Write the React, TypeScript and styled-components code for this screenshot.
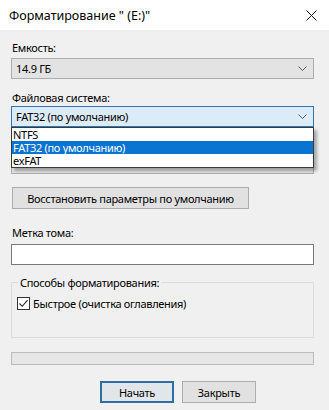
import React from 'react';
import styled, { createGlobalStyle } from 'styled-components';

const GlobalStyle = createGlobalStyle`
  html, body {
    margin: 0;
    padding: 0;
    background: #f0f0f0;
  }
  body {
    font-family: "Noto Sans", "Open Sans", sans-serif;
    font-size: 11px;
    letter-spacing: -0.3px;
    color: #000;
  }
`;

// Окно диалога
const Window = styled.div`
  width: 329px;
  height: 410px;
  background: #f0f0f0;
  display: flex;
  flex-direction: column;
  overflow: hidden;
`;

const TitleBar = styled.div`
  height: 30px;
  flex-shrink: 0;
  background: #fff;
  display: flex;
  align-items: center;
  justify-content: space-between;
  padding: 0 12px 0 9px;
  font-size: 12.5px;
  letter-spacing: 0;
`;

const CloseIcon = styled.svg`
  width: 11px;
  height: 11px;
  margin-top: 1px;
`;

const Content = styled.div`
  display: flex;
  flex-direction: column;
  padding: 0 15px 0 11px;
`;

const Label = styled.div<{ $top: number }>`
  line-height: 15px;
  margin-top: ${(p) => p.$top}px;
  padding-left: 1px;
`;

const ComboWrap = styled.div<{ $top: number }>`
  position: relative;
  margin-top: ${(p) => p.$top}px;
`;

const Combo = styled.div<{ $variant: 'gray' | 'focus' }>`
  height: 21px;
  box-sizing: border-box;
  display: flex;
  align-items: center;
  justify-content: space-between;
  padding: 0 6px 0 4px;
  border: 1px solid ${(p) => (p.$variant === 'focus' ? '#2f76b5' : '#adadad')};
  background: ${(p) => (p.$variant === 'focus' ? '#dcebf8' : '#e3e3e3')};
`;

const Chevron = styled.svg`
  width: 9px;
  height: 5px;
`;

// Выпадающий список поверх содержимого
const DropList = styled.ul`
  position: absolute;
  top: 100%;
  left: 0;
  right: 0;
  margin: 0;
  padding: 0;
  list-style: none;
  background: #fff;
  border: 1px solid #3a3a3a;
  box-shadow: 3px 3px 3px rgba(0, 0, 0, 0.3);
  z-index: 2;
`;

const DropItem = styled.li<{ $selected?: boolean }>`
  height: 13px;
  line-height: 13px;
  padding-left: 1px;
  background: ${(p) => (p.$selected ? '#0a74d2' : '#fff')};
  color: ${(p) => (p.$selected ? '#fff' : '#000')};
`;

const Button = styled.button<{ $primary?: boolean }>`
  height: 22px;
  box-sizing: border-box;
  font-family: inherit;
  font-size: 11px;
  letter-spacing: inherit;
  color: #000;
  padding: 0;
  background: ${(p) => (p.$primary ? '#e1e6ea' : '#e1e1e1')};
  border: ${(p) => (p.$primary ? '2px solid #2f6da3' : '1px solid #adadad')};
`;

const RestoreButton = styled(Button)`
  width: 237px;
  margin: 13px 0 0 1px;
  align-self: flex-start;
`;

const TextInput = styled.div`
  height: 21px;
  box-sizing: border-box;
  margin-top: 4px;
  background: #fff;
  border: 1px solid #7a7a7a;
`;

const GroupBox = styled.fieldset`
  margin: 10px 0 0;
  padding: 0 6px 27px;
  border: 1px solid #dcdcdc;
  min-width: 0;
`;

const Legend = styled.legend`
  padding: 0 2px;
  line-height: 15px;
`;

const CheckRow = styled.label`
  display: flex;
  align-items: center;
  gap: 3px;
  margin-top: 7px;
  margin-left: -1px;
  line-height: 13px;
`;

const CheckBox = styled.span`
  width: 13px;
  height: 13px;
  box-sizing: border-box;
  background: #fff;
  border: 1px solid #333;
  display: flex;
  align-items: center;
  justify-content: center;
`;

const Progress = styled.div`
  height: 13px;
  box-sizing: border-box;
  margin-top: 14px;
  background: #e6e6e6;
  border: 1px solid #bcbcbc;
`;

const ButtonRow = styled.div`
  display: flex;
  gap: 8px;
  margin-top: 16px;
  padding-left: 89px;
`;

const ActionButton = styled(Button)`
  width: 74px;
`;

const ChevronDown = () => (
  <Chevron viewBox="0 0 9 5">
    <path d="M0.5 0.5 L4.5 4.5 L8.5 0.5" fill="none" stroke="#5a5a5a" strokeWidth="1" />
  </Chevron>
);

export default function App() {
  return (
    <Window>
      <GlobalStyle />
      <TitleBar>
        <span>Форматирование " (E:)"</span>
        <CloseIcon viewBox="0 0 11 11">
          <path d="M0.5 0.5 L10.5 10.5 M10.5 0.5 L0.5 10.5" stroke="#111" strokeWidth="1" />
        </CloseIcon>
      </TitleBar>

      <Content>
        <Label $top={10}>Емкость:</Label>
        <ComboWrap $top={3}>
          <Combo $variant="gray">
            <span>14.9 ГБ</span>
            <ChevronDown />
          </Combo>
        </ComboWrap>

        <Label $top={11}>Файловая система:</Label>
        <ComboWrap $top={1}>
          <Combo $variant="focus">
            <span>FAT32 (по умолчанию)</span>
            <ChevronDown />
          </Combo>
          <DropList>
            <DropItem>NTFS</DropItem>
            <DropItem $selected>FAT32 (по умолчанию)</DropItem>
            <DropItem>exFAT</DropItem>
          </DropList>
        </ComboWrap>

        {/* поле, закрытое выпадающим списком: видна только нижняя кромка */}
        <ComboWrap $top={26}>
          <Combo $variant="gray" />
        </ComboWrap>

        <RestoreButton>Восстановить параметры по умолчанию</RestoreButton>

        <Label $top={16}>Метка тома:</Label>
        <TextInput />

        <GroupBox>
          <Legend>Способы форматирования:</Legend>
          <CheckRow>
            <CheckBox>
              <svg width="11" height="11" viewBox="0 0 11 11">
                <path d="M1.5 5.5 L4.2 8.3 L9.6 2.2" fill="none" stroke="#222" strokeWidth="1.1" />
              </svg>
            </CheckBox>
            Быстрое (очистка оглавления)
          </CheckRow>
        </GroupBox>

        <Progress />

        <ButtonRow>
          <ActionButton $primary>Начать</ActionButton>
          <ActionButton>Закрыть</ActionButton>
        </ButtonRow>
      </Content>
    </Window>
  );
}
